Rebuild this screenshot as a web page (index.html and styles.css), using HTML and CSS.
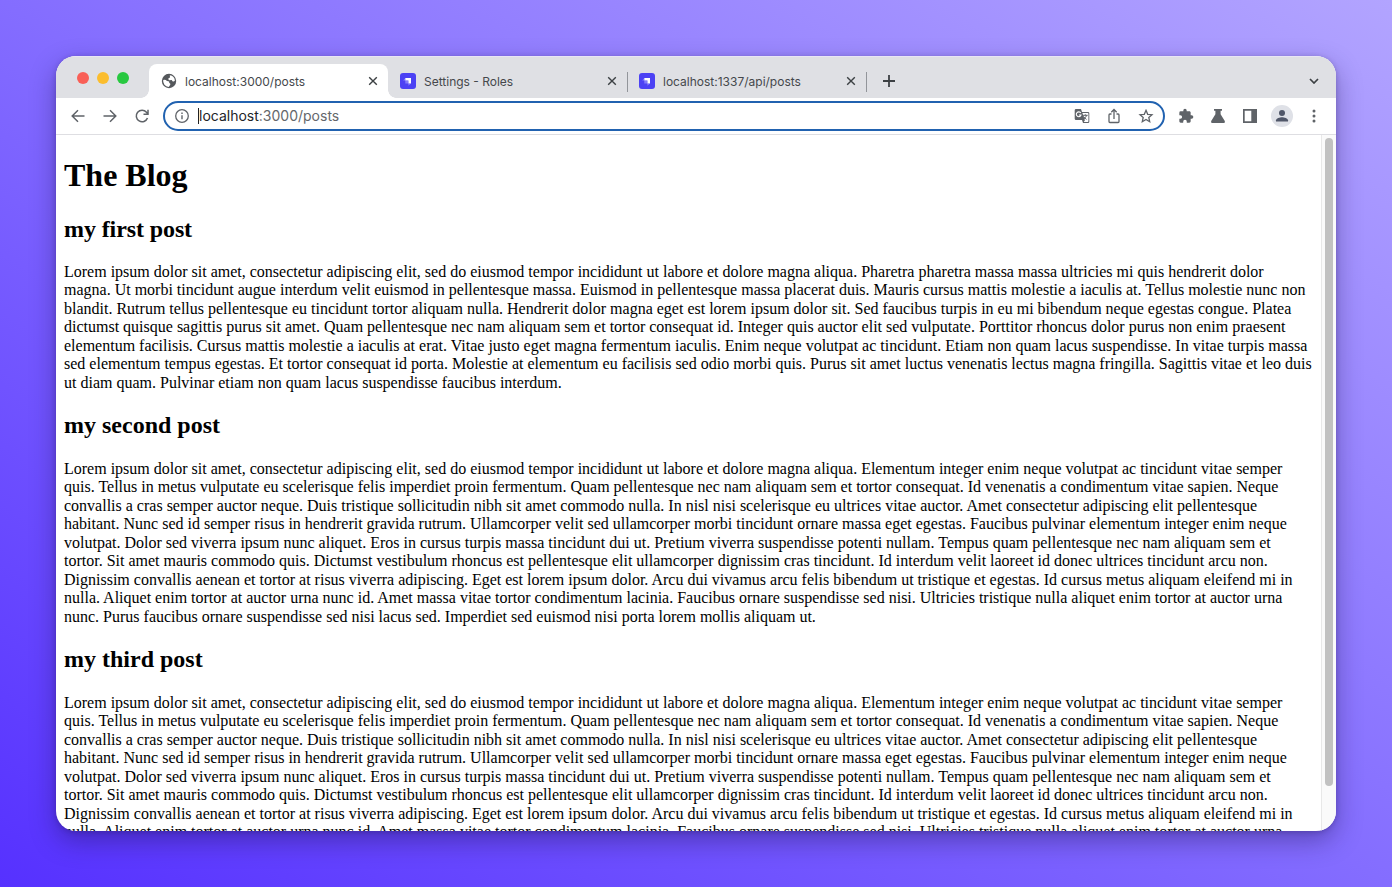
FILE: index.html
```html
<!DOCTYPE html>
<html lang="en">
<head>
<meta charset="utf-8">
<title>localhost:3000/posts</title>
<link rel="stylesheet" href="styles.css">
</head>
<body>
<div class="window">
  <header class="tabstrip">
    <div class="lights"><i class="light red"></i><i class="light yellow"></i><i class="light green"></i></div>
    <div class="tab active">
      <svg class="favicon" viewBox="0 0 16 16"><circle cx="8" cy="8" r="7.2" fill="#55585c"/><path d="M2.200 7Q4.500 6.400 6 8l1.500.2q1 .4.700 1.500L9.500 11q-.5 1.500-1.800 2.900A6 6 0 0 1 2.200 7ZM8.800 2.200a6 6 0 0 1 5.100 5.500q-1.300 1.300-2.400.5l-.8-1.300-2.500.3q-1.400-.8-.7-2l1.500-.7Z" fill="#fff"/></svg>
      <span class="title">localhost:3000/posts</span>
      <svg class="close" viewBox="0 0 10 10"><path d="m1.200 1.200 7.600 7.600m0-7.600L1.200 8.800"/></svg>
    </div>
    <div class="tab">
      <svg class="favicon" viewBox="0 0 16 16"><rect width="16" height="16" rx="3" fill="#4c42f4"/><path d="M5.300 5h5.700v5.500H8.400V7.600H5.300Z" fill="#fff"/><path d="M5.300 5v2.600h3.100v2.900H11l-2.600 2.200v-2.200H5.300V7.600H3.100Z" fill="#b0abff" opacity=".55"/></svg>
      <span class="title">Settings - Roles</span>
      <svg class="close" viewBox="0 0 10 10"><path d="m1.200 1.200 7.600 7.600m0-7.600L1.200 8.800"/></svg>
    </div>
    <div class="tab divided">
      <svg class="favicon" viewBox="0 0 16 16"><rect width="16" height="16" rx="3" fill="#4c42f4"/><path d="M5.300 5h5.700v5.500H8.400V7.600H5.300Z" fill="#fff"/><path d="M5.300 5v2.600h3.100v2.900H11l-2.600 2.200v-2.200H5.300V7.600H3.100Z" fill="#b0abff" opacity=".55"/></svg>
      <span class="title">localhost:1337/api/posts</span>
      <svg class="close" viewBox="0 0 10 10"><path d="m1.200 1.200 7.600 7.600m0-7.600L1.200 8.800"/></svg>
    </div>
    <div class="newtab"><svg class="plus" viewBox="0 0 12 12"><path d="M6 0v12M0 6h12"/></svg></div>
    <svg class="chevron" viewBox="0 0 10 6"><path d="m1 1 4 4 4-4"/></svg>
  </header>
  <nav class="toolbar">
    <svg class="nav-icon" viewBox="0 0 16 16"><path d="M14.500 8H2.200M8 2.200 2.200 8 8 13.800"/></svg>
    <svg class="nav-icon" viewBox="0 0 16 16"><path d="M1.500 8h12.300M8 2.200 13.800 8 8 13.800"/></svg>
    <svg class="nav-icon" viewBox="0 0 16 16"><path d="M13.500 10A5.800 5.800 0 1 1 12.500 4.200L14 5.700M14 1.800v4.500H9.500"/></svg>
    <div class="omnibox">
      <svg class="info" viewBox="0 0 14 14"><circle cx="7" cy="7" r="6.300" fill="none" stroke="#5f6368" stroke-width="1.300"/><path d="M7 6.300v4M7 3.600v1.300" stroke="#5f6368" stroke-width="1.400"/></svg>
      <i class="caret"></i>
      <span class="url"><b>localhost</b>:3000/posts</span>
      <svg class="box-icon" viewBox="0 0 16 16"><path d="M2 1h5l1 3h6a1.300 1.300 0 0 1 1.300 1.300v8.400A1.300 1.300 0 0 1 14 15H9l-1-3H2A1.300 1.300 0 0 1 .7 10.700V2.300A1.300 1.300 0 0 1 2 1Z" fill="#5f6368"/><path d="M8.400 5h5.300q.7 0 .7.7v7.600q0 .7-.7.700H9.800l1.100-1.700Z" fill="#fff"/><path d="M6.800 5.100A2.400 2.400 0 1 0 7 7H4.900" fill="none" stroke="#fff" stroke-width="1.100"/><path d="M9 7.300h4.700m-2.400-1v1m1.400 0q-.7 2.200-3 3.800m-.2-2.700q1 1.700 3 3" fill="none" stroke="#5f6368"/></svg>
      <svg class="box-icon" viewBox="0 0 16 16"><path d="M5.500 6H3.900q-.9 0-.9.900v6.700q0 .9.900.9h8.200q.9 0 .9-.9V6.900q0-.9-.9-.9h-1.600M8 11V1.800M5.300 4.200 8 1.500l2.700 2.700" fill="none" stroke="#5f6368" stroke-width="1.300"/></svg>
      <svg class="box-icon" viewBox="0 0 16 16"><path d="m8 2.300 1.700 4 4.300.4-3.200 2.800.9 4.200L8 11.500l-3.700 2.200.9-4.200L2 6.700l4.300-.4Z" fill="none" stroke="#5f6368" stroke-width="1.300"/></svg>
    </div>
    <svg class="tool" viewBox="0 0 24 24"><path d="M20.500 11H19V7c0-1.100-.9-2-2-2h-4V3.500a2.500 2.500 0 0 0-5 0V5H4a2 2 0 0 0-2 2v3.800h1.500a2.700 2.700 0 0 1 0 5.400H2V20c0 1.100.9 2 2 2h3.800v-1.500a2.700 2.700 0 0 1 5.400 0V22H17c1.100 0 2-.9 2-2v-4h1.500a2.500 2.500 0 0 0 0-5Z"/></svg>
    <svg class="tool" viewBox="0 0 16 16"><path d="M4 1h8v1.700h-1.400v3.500l4.200 6.900q.8 1.900-1 1.900H2.200q-1.800 0-1-1.900l4.200-6.900V2.700H4Z"/></svg>
    <svg class="tool" viewBox="0 0 16 16"><path d="M1 1h14v14H1Zm1.700 1.700v10.600h6.600V2.700Z" fill-rule="evenodd"/></svg>
    <svg class="avatar" viewBox="0 0 22 22"><circle cx="11" cy="11" r="11" fill="#dfe1e7"/><circle cx="11" cy="7.900" r="3" fill="#505769"/><path d="M5 16.500v-1.200c0-2 3.900-3.100 6-3.100s6 1.100 6 3.100v1.200Z" fill="#505769"/></svg>
    <svg class="menu" viewBox="0 0 4 14"><circle cx="2" cy="2" r="1.500"/><circle cx="2" cy="7" r="1.500"/><circle cx="2" cy="12" r="1.500"/></svg>
  </nav>
  <div class="viewport">
    <main class="page">
      <h1>The Blog</h1>
      <h2 class="first">my first post</h2>
      <p>Lorem ipsum dolor sit amet, consectetur adipiscing elit, sed do eiusmod tempor incididunt ut labore et dolore magna aliqua. Pharetra pharetra massa massa ultricies mi quis hendrerit dolor<br>
magna. Ut morbi tincidunt augue interdum velit euismod in pellentesque massa. Euismod in pellentesque massa placerat duis. Mauris cursus mattis molestie a iaculis at. Tellus molestie nunc non<br>
blandit. Rutrum tellus pellentesque eu tincidunt tortor aliquam nulla. Hendrerit dolor magna eget est lorem ipsum dolor sit. Sed faucibus turpis in eu mi bibendum neque egestas congue. Platea<br>
dictumst quisque sagittis purus sit amet. Quam pellentesque nec nam aliquam sem et tortor consequat id. Integer quis auctor elit sed vulputate. Porttitor rhoncus dolor purus non enim praesent<br>
elementum facilisis. Cursus mattis molestie a iaculis at erat. Vitae justo eget magna fermentum iaculis. Enim neque volutpat ac tincidunt. Etiam non quam lacus suspendisse. In vitae turpis massa<br>
sed elementum tempus egestas. Et tortor consequat id porta. Molestie at elementum eu facilisis sed odio morbi quis. Purus sit amet luctus venenatis lectus magna fringilla. Sagittis vitae et leo duis<br>
ut diam quam. Pulvinar etiam non quam lacus suspendisse faucibus interdum.</p>
      <h2>my second post</h2>
      <p>Lorem ipsum dolor sit amet, consectetur adipiscing elit, sed do eiusmod tempor incididunt ut labore et dolore magna aliqua. Elementum integer enim neque volutpat ac tincidunt vitae semper<br>
quis. Tellus in metus vulputate eu scelerisque felis imperdiet proin fermentum. Quam pellentesque nec nam aliquam sem et tortor consequat. Id venenatis a condimentum vitae sapien. Neque<br>
convallis a cras semper auctor neque. Duis tristique sollicitudin nibh sit amet commodo nulla. In nisl nisi scelerisque eu ultrices vitae auctor. Amet consectetur adipiscing elit pellentesque<br>
habitant. Nunc sed id semper risus in hendrerit gravida rutrum. Ullamcorper velit sed ullamcorper morbi tincidunt ornare massa eget egestas. Faucibus pulvinar elementum integer enim neque<br>
volutpat. Dolor sed viverra ipsum nunc aliquet. Eros in cursus turpis massa tincidunt dui ut. Pretium viverra suspendisse potenti nullam. Tempus quam pellentesque nec nam aliquam sem et<br>
tortor. Sit amet mauris commodo quis. Dictumst vestibulum rhoncus est pellentesque elit ullamcorper dignissim cras tincidunt. Id interdum velit laoreet id donec ultrices tincidunt arcu non.<br>
Dignissim convallis aenean et tortor at risus viverra adipiscing. Eget est lorem ipsum dolor. Arcu dui vivamus arcu felis bibendum ut tristique et egestas. Id cursus metus aliquam eleifend mi in<br>
nulla. Aliquet enim tortor at auctor urna nunc id. Amet massa vitae tortor condimentum lacinia. Faucibus ornare suspendisse sed nisi. Ultricies tristique nulla aliquet enim tortor at auctor urna<br>
nunc. Purus faucibus ornare suspendisse sed nisi lacus sed. Imperdiet sed euismod nisi porta lorem mollis aliquam ut.</p>
      <h2>my third post</h2>
      <p>Lorem ipsum dolor sit amet, consectetur adipiscing elit, sed do eiusmod tempor incididunt ut labore et dolore magna aliqua. Elementum integer enim neque volutpat ac tincidunt vitae semper<br>
quis. Tellus in metus vulputate eu scelerisque felis imperdiet proin fermentum. Quam pellentesque nec nam aliquam sem et tortor consequat. Id venenatis a condimentum vitae sapien. Neque<br>
convallis a cras semper auctor neque. Duis tristique sollicitudin nibh sit amet commodo nulla. In nisl nisi scelerisque eu ultrices vitae auctor. Amet consectetur adipiscing elit pellentesque<br>
habitant. Nunc sed id semper risus in hendrerit gravida rutrum. Ullamcorper velit sed ullamcorper morbi tincidunt ornare massa eget egestas. Faucibus pulvinar elementum integer enim neque<br>
volutpat. Dolor sed viverra ipsum nunc aliquet. Eros in cursus turpis massa tincidunt dui ut. Pretium viverra suspendisse potenti nullam. Tempus quam pellentesque nec nam aliquam sem et<br>
tortor. Sit amet mauris commodo quis. Dictumst vestibulum rhoncus est pellentesque elit ullamcorper dignissim cras tincidunt. Id interdum velit laoreet id donec ultrices tincidunt arcu non.<br>
Dignissim convallis aenean et tortor at risus viverra adipiscing. Eget est lorem ipsum dolor. Arcu dui vivamus arcu felis bibendum ut tristique et egestas. Id cursus metus aliquam eleifend mi in<br>
nulla. Aliquet enim tortor at auctor urna nunc id. Amet massa vitae tortor condimentum lacinia. Faucibus ornare suspendisse sed nisi. Ultricies tristique nulla aliquet enim tortor at auctor urna</p>
    </main>
    <div class="scrollbar"><div class="thumb"></div></div>
  </div>
</div>
</body>
</html>
```
FILE: styles.css
```css
* { box-sizing: border-box; }
body {
  margin: 0;
  height: 887px;
  padding: 56px;
  overflow: hidden;
  background: linear-gradient(to top right, #5631ff 0%, #846dff 50%, #b2a4ff 100%);
}
svg { display: block; flex: none; }
.window {
  height: 775px;
  border-radius: 20px;
  overflow: hidden;
  display: flex;
  flex-direction: column;
  background: #fff;
  box-shadow: 0 10px 26px rgba(30, 15, 80, .38), 0 1px 5px rgba(30, 15, 80, .25);
}
.tabstrip {
  height: 42px;
  flex: none;
  display: flex;
  align-items: flex-end;
  background: #dfe0e4;
  padding-right: 17px;
  box-shadow: inset 0 1px #e9e6f5;
}
.lights { width: 93px; height: 42px; padding: 15.6px 0 0 21px; display: flex; gap: 8px; }
.light { width: 12px; height: 12px; border-radius: 50%; }
.red { background: #f95f57; }
.yellow { background: #fbbd2e; }
.green { background: #28c840; }
.tab { width: 239px; height: 34px; padding: 0 10px 0 12px; display: flex; align-items: center; position: relative; }
.tab.active { background: #fff; border-radius: 8px 8px 0 0; }
.tab.active::before, .tab.active::after { content: ""; position: absolute; bottom: 0; width: 8px; height: 8px; }
.tab.active::before { left: -8px; background: radial-gradient(circle at 0 0, transparent 7.5px, #fff 8px); }
.tab.active::after { right: -8px; background: radial-gradient(circle at 100% 0, transparent 7.5px, #fff 8px); }
.tab.divided::before, .tab.divided::after { content: ""; position: absolute; top: 8px; width: 1px; height: 20px; background: #92959a; }
.tab.divided::before { left: 0; }
.tab.divided::after { right: -1px; }
.favicon { width: 16px; height: 16px; }
.title { font: 12px Inter, sans-serif; color: #45484c; margin: 0 auto 0 8px; white-space: nowrap; }
.close { width: 10px; height: 10px; fill: none; stroke: #3c4043; stroke-width: 1.4; }
.newtab { height: 34px; padding-left: 17px; display: flex; align-items: center; }
.plus { width: 12px; height: 12px; fill: none; stroke: #3c4043; stroke-width: 1.8; }
.chevron { width: 10px; height: 6px; margin: 0 0 14px auto; fill: none; stroke: #3c4043; stroke-width: 1.7; }
.toolbar {
  height: 37px;
  flex: none;
  display: flex;
  align-items: center;
  gap: 16px;
  padding: 0 20px 0 14px;
  border-bottom: 1px solid #dedee2;
}
.nav-icon { width: 16px; height: 16px; fill: none; stroke: #5f6368; stroke-width: 1.5; }
.omnibox {
  width: 1002px;
  height: 30px;
  margin-left: -3px;
  margin-right: -3px;
  border: 2px solid #2162b0;
  border-radius: 15px;
  padding: 0 9px 0 10px;
  display: flex;
  align-items: center;
  gap: 16px;
}
.info { width: 14px; height: 14px; }
.caret { width: 1px; height: 16px; margin: 0 -16px 0 -7px; background: #222; }
.url { font: 14px/17px Inter, sans-serif; color: #64676b; margin: -1px auto 0 0; }
.url b { font-weight: 400; color: #222427; }
.box-icon { width: 16px; height: 16px; }
.tool { width: 16px; height: 16px; fill: #5f6368; }
.avatar { width: 22px; height: 22px; margin: 0 -3px; }
.menu { width: 4px; height: 14px; margin-left: 6px; fill: #5f6368; }
.viewport { flex: 1; min-height: 0; display: flex; overflow: hidden; }
.page { flex: 1; min-width: 0; padding: 0 8px; font-family: "Liberation Serif", serif; color: #000; white-space: nowrap; }
h1 { font-size: 32px; line-height: 37px; margin: 22.1px 0 21.44px; }
h2 { font-size: 24px; line-height: 27.5px; margin: 19.92px 0; }
h2.first { letter-spacing: -.1px; }
p { font-size: 16px; line-height: 18.5px; margin: 0; }
.scrollbar { width: 15px; flex: none; background: #fafafa; border-left: 1px solid #e8e8e8; padding: 3px 3px 0; }
.thumb { width: 8px; height: 648px; border-radius: 4px; background: #c1c1c1; }
```
